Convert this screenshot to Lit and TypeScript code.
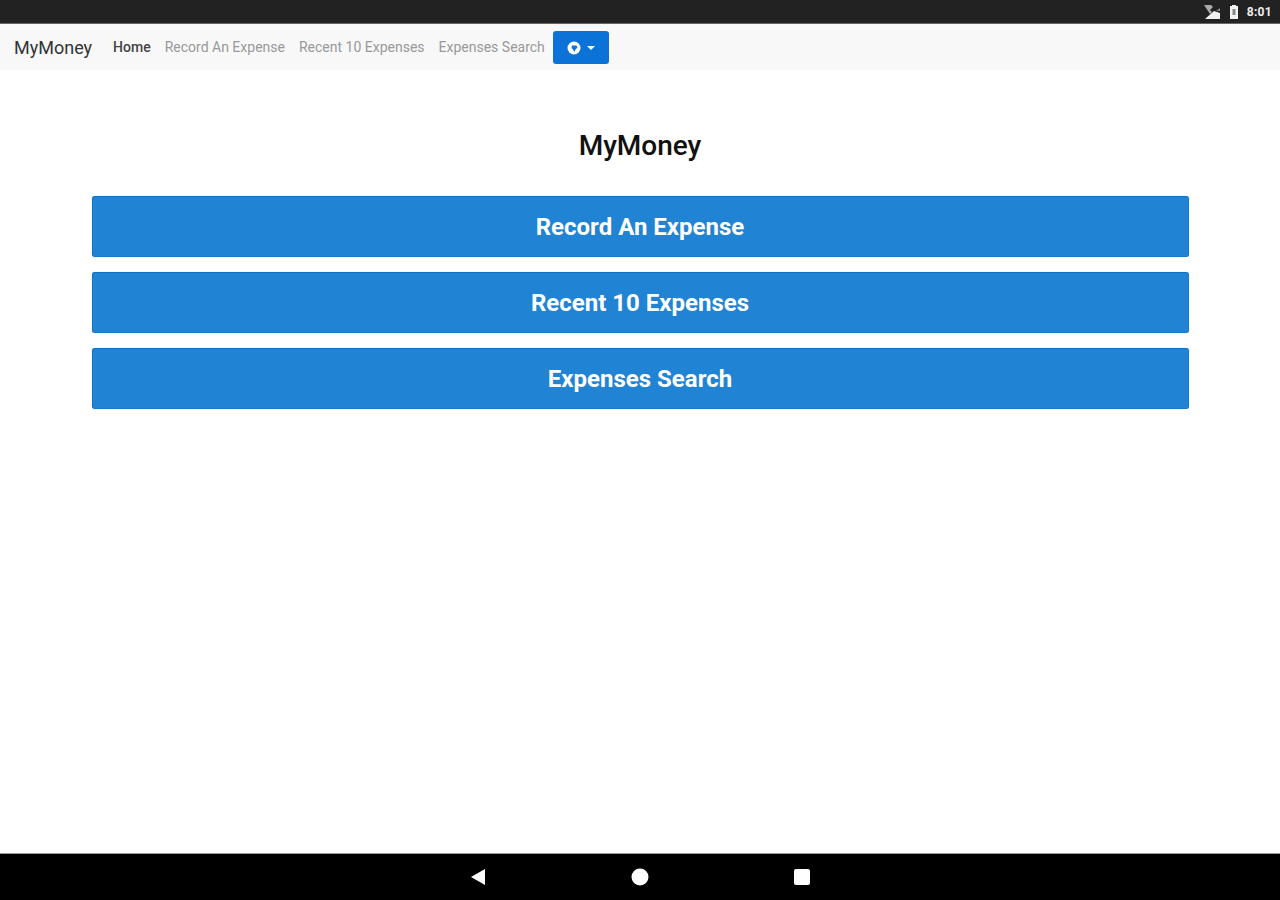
import { LitElement, html, css } from 'lit';
import { customElement } from 'lit/decorators.js';

const FONT = css`Roboto, "Liberation Sans", sans-serif`;

@customElement('app-root')
export class AppRoot extends LitElement {
  static styles = css`
    :host {
      display: flex;
      flex-direction: column;
      height: 900px;
      font-family: ${FONT};
      background: #fff;
    }

    .status {
      height: 24px;
      box-sizing: border-box;
      flex: none;
      background: #222;
      border-bottom: 1px solid #666;
      display: flex;
      align-items: center;
      justify-content: flex-end;
      padding-right: 8px;
      color: #eee;
    }
    .status svg { display: block; }
    .signal { margin-right: 8px; }
    .clock {
      font-size: 12px;
      font-weight: 700;
      margin-left: 8px;
      letter-spacing: 0.3px;
    }

    .navbar {
      height: 46px;
      flex: none;
      background: #f8f8f8;
      display: flex;
      align-items: center;
      padding-left: 14px;
    }
    .brand {
      font-size: 18px;
      color: #333;
      margin-right: 21px;
    }
    .link {
      font-size: 14px;
      color: #999;
      margin-right: 14px;
    }
    .link.active { color: #444; font-weight: 500; }
    .lang {
      width: 56px;
      height: 33px;
      margin-left: -6px;
      margin-top: 1px;
      background: #0b73d8;
      border-radius: 3px;
      display: flex;
      align-items: center;
      justify-content: center;
      gap: 6px;
    }
    .caret {
      width: 0;
      height: 0;
      border-left: 4px solid transparent;
      border-right: 4px solid transparent;
      border-top: 4px solid #fff;
    }

    main {
      flex: 1;
      display: flex;
      flex-direction: column;
      align-items: center;
      padding-top: 59px;
    }
    h1 {
      margin: 0 0 34px;
      font-size: 28px;
      line-height: 33px;
      font-weight: 500;
      color: #111;
    }
    .btn {
      width: 1097px;
      height: 61px;
      box-sizing: border-box;
      margin-bottom: 15px;
      display: flex;
      align-items: center;
      justify-content: center;
      background: #2183d3;
      border: 1px solid #1a7acb;
      border-top-color: #0f72c4;
      border-left-color: #0f72c4;
      border-radius: 3px;
      box-shadow: 0 0 1px rgba(33, 131, 211, 0.5);
      color: #fff;
      font-size: 24px;
      font-weight: 700;
    }

    .nav-bar {
      height: 47px;
      flex: none;
      background: #000;
      border-top: 1px solid #999;
      box-sizing: border-box;
      display: flex;
      align-items: center;
      justify-content: center;
      gap: 145px;
    }
    .nav-bar svg { display: block; }
  `;

  render() {
    return html`
      <div class="status">
        <svg class="signal" width="18" height="16" viewBox="0 0 18 16">
          <path d="M1 1h7l2 2-3 3 2 2-2 2z" fill="#aaa" />
          <path d="M17 4v3h-4z" fill="#888" />
          <path d="M2 15l9-8 6 2v6z" fill="#f2f2f2" />
        </svg>
        <svg width="10" height="16" viewBox="0 0 10 16">
          <path d="M3 1h4v1h2v13H1V2h2z" fill="#f2f2f2" />
          <rect x="3.5" y="5" width="3" height="6" fill="#888" />
        </svg>
        <span class="clock">8:01</span>
      </div>
      <nav class="navbar">
        <span class="brand">MyMoney</span>
        <span class="link active">Home</span>
        <span class="link">Record An Expense</span>
        <span class="link">Recent 10 Expenses</span>
        <span class="link">Expenses Search</span>
        <div class="lang">
          <svg width="14" height="14" viewBox="0 0 14 14">
            <circle cx="7" cy="7" r="6.5" fill="#fff" />
            <path d="M5 4.5h4.5l1 2-2 2-1 2.5-1.5-2.5-1.5-1.5z" fill="#0b73d8" />
          </svg>
          <span class="caret"></span>
        </div>
      </nav>
      <main>
        <h1>MyMoney</h1>
        <div class="btn">Record An Expense</div>
        <div class="btn">Recent 10 Expenses</div>
        <div class="btn">Expenses Search</div>
      </main>
      <div class="nav-bar">
        <svg width="16" height="18" viewBox="0 0 16 18"><path d="M15 1v16L1 9z" fill="#fff" /></svg>
        <svg width="18" height="18" viewBox="0 0 18 18"><circle cx="9" cy="9" r="8.5" fill="#fff" /></svg>
        <svg width="16" height="16" viewBox="0 0 16 16"><rect width="16" height="16" rx="2" fill="#fff" /></svg>
      </div>
    `;
  }
}
